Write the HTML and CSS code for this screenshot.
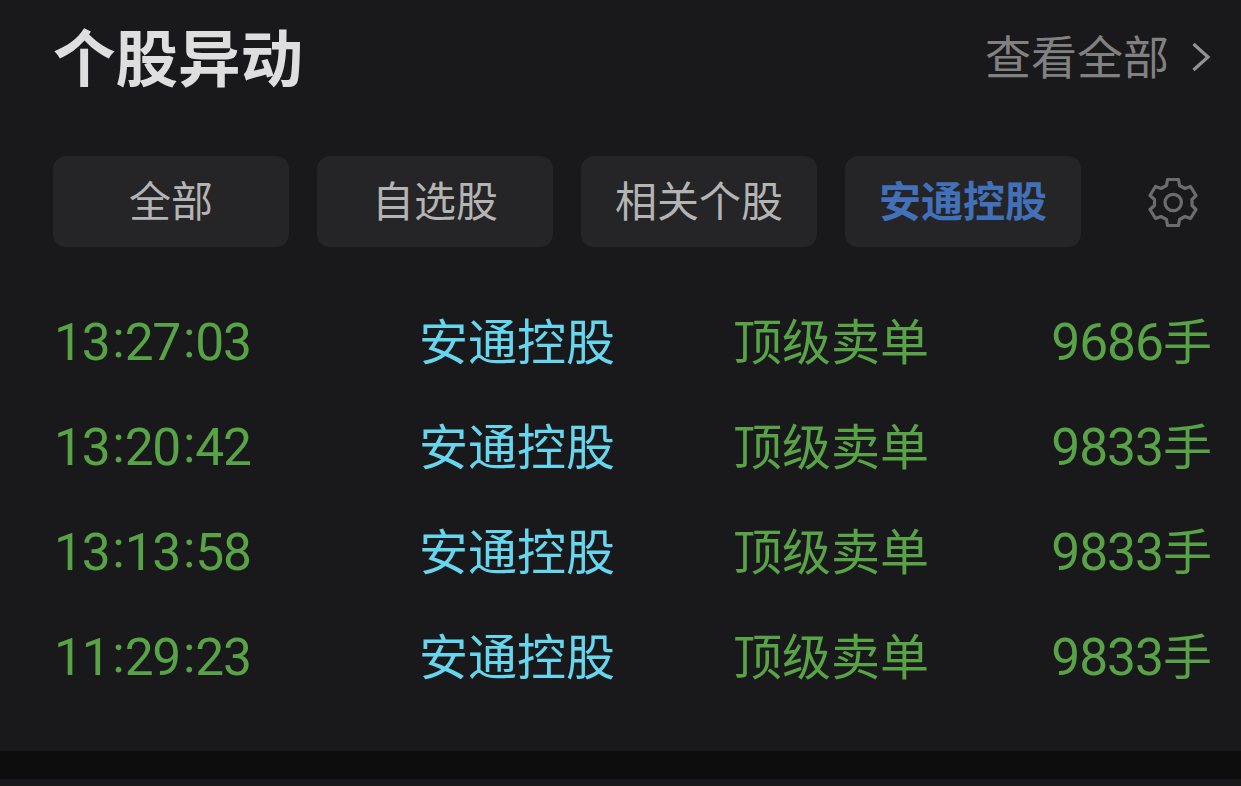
FILE: index.html
```html
<!DOCTYPE html>
<html lang="zh-CN">
<head>
<meta charset="utf-8">
<title>个股异动</title>
<link rel="stylesheet" href="styles.css">
</head>
<body>
<section class="panel">
  <header class="head">
    <h1 class="title">个股异动</h1>
    <a class="more">查看全部<svg class="chevron" width="20" height="32" viewBox="0 0 20 32"><path d="M2.5 3 17 16 2.5 29"/></svg></a>
  </header>
  <nav class="tabs">
    <button class="tab">全部</button>
    <button class="tab">自选股</button>
    <button class="tab">相关个股</button>
    <button class="tab active">安通控股</button>
    <svg class="gear" width="50" height="50" viewBox="0 0 50 50"><path d="M19.5 2.5H30.5L31.5 8.5L37 11.5L42.5 9.5L48 18.5L44 22.5V28.5L48 32.5L42.5 41.5L37 39.5L31.5 42.5L30.5 48.5H19.5L18.5 42.5L13 39.5L7.5 41.5L2 32.5L6.5 28.5V22.5L2 18.5L7.5 9.5L13 11.5L18.5 8.5Z"/><circle cx="25.2" cy="25.5" r="8.2"/></svg>
  </nav>
  <div class="list">
    <div class="row"><span class="time">13<i>:</i>27<i>:</i>03</span><span class="name">安通控股</span><span class="kind">顶级卖单</span><span class="amount"><b>9686</b>手</span></div>
    <div class="row"><span class="time">13<i>:</i>20<i>:</i>42</span><span class="name">安通控股</span><span class="kind">顶级卖单</span><span class="amount"><b>9833</b>手</span></div>
    <div class="row"><span class="time">13<i>:</i>13<i>:</i>58</span><span class="name">安通控股</span><span class="kind">顶级卖单</span><span class="amount"><b>9833</b>手</span></div>
    <div class="row"><span class="time">11<i>:</i>29<i>:</i>23</span><span class="name">安通控股</span><span class="kind">顶级卖单</span><span class="amount"><b>9833</b>手</span></div>
  </div>
</section>
<div class="divider"></div>
</body>
</html>
```
FILE: styles.css
```css
* { box-sizing: border-box; }
body {
  margin: 0;
  height: 786px;
  overflow: hidden;
  background: #19191b;
  font-family: "Noto Sans CJK SC", sans-serif;
}
.panel { height: 751px; }
.head {
  display: flex;
  justify-content: space-between;
  align-items: flex-start;
  height: 118px;
  padding: 0 30px 0 53px;
}
.title {
  margin: 0;
  font-size: 62.5px;
  line-height: 109px;
  font-weight: 700;
  color: #dedede;
}
.more {
  display: flex;
  align-items: center;
  gap: 22px;
  font-size: 46px;
  line-height: 109px;
  color: #818181;
}
.chevron { margin-top: 5px; fill: none; stroke: #929292; stroke-width: 3.2; }
.tabs {
  display: flex;
  align-items: center;
  gap: 28px;
  margin-top: 38px;
  padding-left: 53px;
  height: 91px;
}
.tab {
  width: 236px;
  height: 91px;
  padding: 0 0 5px;
  border: 0;
  border-radius: 13px;
  background: #252527;
  color: #b4b4b4;
  font: 400 42px/86px "Noto Sans CJK SC", sans-serif;
}
.active { color: #4270b9; font-weight: 700; }
.gear { margin: 1px 0 0 39px; fill: none; stroke: #6c6c6c; stroke-width: 3.2; stroke-linejoin: round; }
.list { margin-top: 43px; }
.row {
  display: grid;
  grid-template-columns: 365px 314px 260px 1fr;
  height: 105px;
  padding: 0 29px 0 54px;
  font-size: 49px;
  line-height: 97px;
  color: #57a345;
}
.time, .amount b {
  font-family: Roboto, sans-serif;
  font-size: 51.5px;
  font-weight: 400;
  letter-spacing: -1px;
}
.time { line-height: 105px; letter-spacing: -1.3px; }
.time i { display: inline-block; line-height: 1; font-style: normal; padding: 0 1.2px 0 3px; transform: translateY(-3px); }
.name { color: #65d6ed; }
.amount { line-height: 97px; text-align: right; }
.divider { height: 28px; background: #0d0d0d; }
```
